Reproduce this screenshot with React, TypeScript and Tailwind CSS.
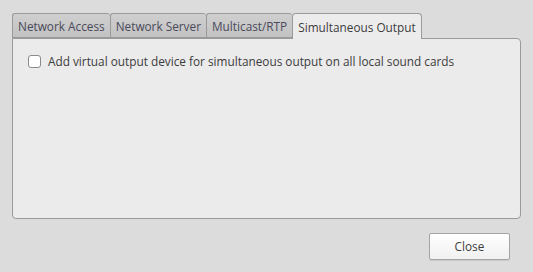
import React, { useState } from 'react';

const tabs = ['Network Access', 'Network Server', 'Multicast/RTP', 'Simultaneous Output'];

const App: React.FC = () => {
  const [active, setActive] = useState(3);
  const [checked, setChecked] = useState(false);

  return (
    <div
      className="w-[533px] h-[272px] bg-[#dcdcdc] text-[#3c3c3c] text-[11.8px] flex flex-col px-[12px] pt-[12px]"
      style={{ fontFamily: '"Open Sans", "Noto Sans", sans-serif' }}
    >
      {/* Tab bar */}
      <div className="flex items-end h-[26px] relative z-10">
        {tabs.map((t, i) =>
          i === active ? (
            <button
              key={t}
              onClick={() => setActive(i)}
              className="h-[26px] px-[5px] -mb-px bg-[#ececec] border border-b-0 border-[#9a9a9a] rounded-t-[4px] leading-[22px] text-[#3c3c3c]"
            >
              {t}
            </button>
          ) : (
            <button
              key={t}
              onClick={() => setActive(i)}
              className="h-[25px] px-[5px] bg-gradient-to-b from-[#cfcfcf] to-[#c2c2c2] border border-[#9a9a9a] border-r-0 rounded-t-[3px] leading-[22px] text-[#4a4a5a]"
            >
              {t}
            </button>
          )
        )}
      </div>

      {/* Panel */}
      <div className="h-[181px] bg-[#ebebeb] border border-[#9a9a9a] rounded-b-[4px] rounded-tr-[4px] px-[15px] pt-[14px]">
        <label className="flex items-center gap-[7px] cursor-pointer">
          <input
            type="checkbox"
            checked={checked}
            onChange={e => setChecked(e.target.checked)}
            className="appearance-none w-[13px] h-[13px] bg-white border border-[#8a8a8a] rounded-[3px] checked:bg-[#5a8fd0]"
          />
          <span className="leading-[16px]">
            Add virtual output device for simultaneous output on all local sound cards
          </span>
        </label>
      </div>

      {/* Footer */}
      <div className="flex justify-end pt-[14px] pr-[11px]">
        <button className="w-[81px] h-[27px] bg-gradient-to-b from-white to-[#f0f0f0] border border-[#a4a4a4] rounded-[2px] text-[#3c3c3c] shadow-[0_1px_0_rgba(0,0,0,0.08)]">
          Close
        </button>
      </div>
    </div>
  );
};

export default App;
